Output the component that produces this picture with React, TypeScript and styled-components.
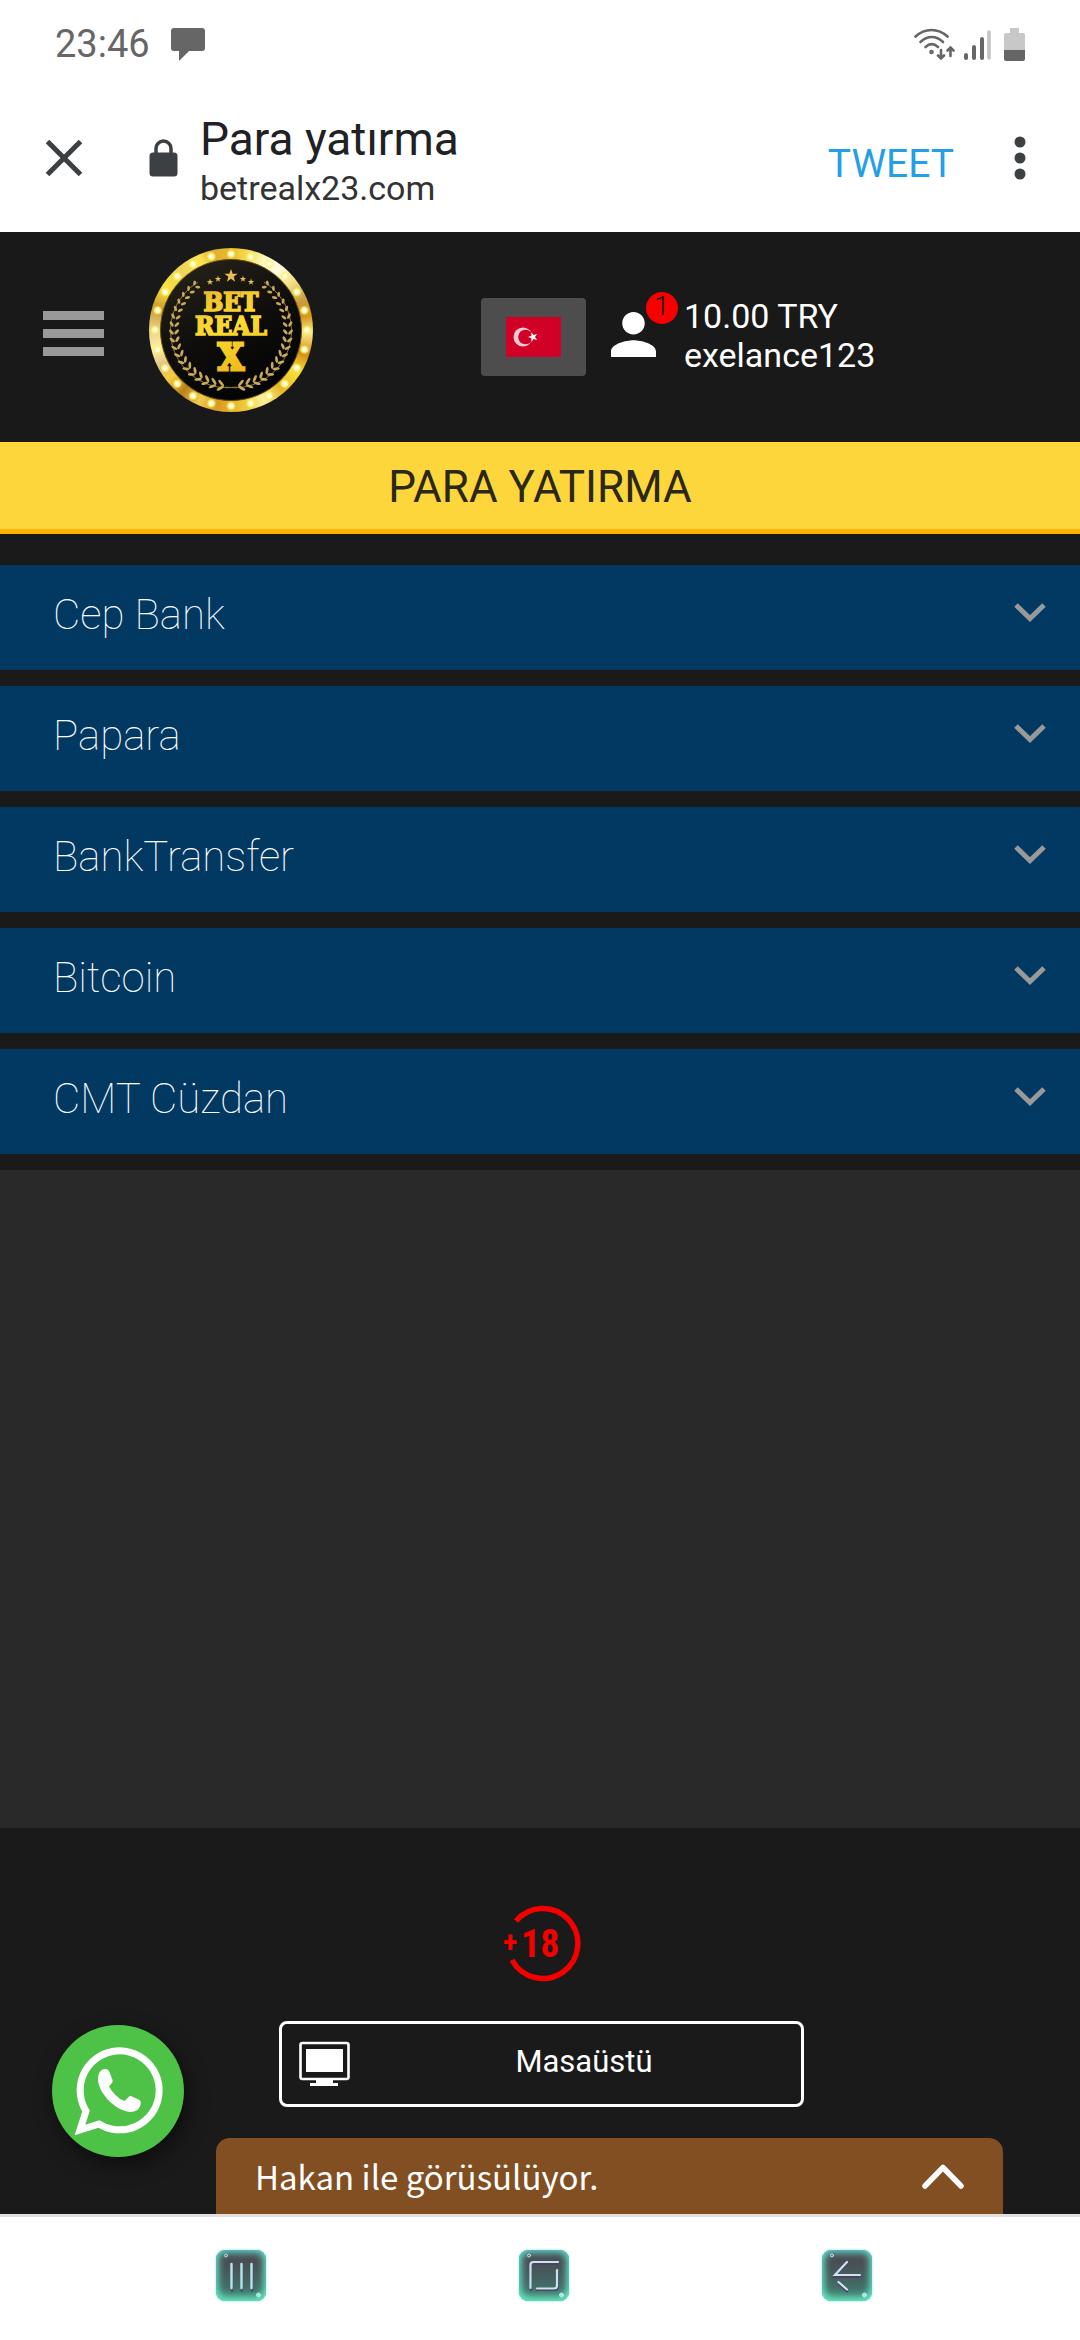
import React from "react";
import styled, { createGlobalStyle } from "styled-components";

const GlobalStyle = createGlobalStyle`
  * { box-sizing: border-box; }
  body { margin: 0; background: #1a1a1a; font-family: Roboto, sans-serif; }
  button { font-family: inherit; border: 0; padding: 0; background: none; cursor: pointer; }
  svg { display: block; flex: none; }
  h1, h2, p { margin: 0; font-weight: 400; }
`;

const Screen = styled.div`
  min-height: 100vh;
  display: flex;
  flex-direction: column;
`;

const StatusBar = styled.div`
  height: 88px;
  padding: 0 55px;
  display: flex;
  align-items: center;
  justify-content: space-between;
  background: #fff;
  color: #666;
`;

const StatusGroup = styled.div<{ $gap: number }>`
  display: flex;
  align-items: center;
  gap: ${(p) => p.$gap}px;
`;

const Clock = styled.time`
  font-size: 38px;
  line-height: 44px;
`;

const BrowserBar = styled.header`
  height: 144px;
  padding: 0 46px 4px 45px;
  display: flex;
  align-items: center;
  background: #fff;
  color: #3c4043;
`;

const IconButton = styled.button`
  display: flex;
  color: inherit;
`;

const LockSlot = styled.span`
  margin-left: 66px;
`;

const PageInfo = styled.div`
  flex: 1;
  padding: 6px 0 0 22px;
`;

const PageTitle = styled.p`
  font-size: 46px;
  line-height: 54px;
  color: #202124;
`;

const PageUrl = styled.p`
  font-size: 34px;
  line-height: 44px;
  color: #333;
`;

const TweetButton = styled.button`
  padding-top: 12px;
  margin-right: 53px;
  font-size: 39px;
  line-height: 48px;
  color: #259ee8;
`;

const SiteHeader = styled.header`
  height: 210px;
  padding: 0 43px 14px;
  display: flex;
  align-items: center;
  background: #191919;
`;

const MenuButton = styled.button`
  width: 61px;
  margin: 7px 45px 0 0;
  display: flex;
  flex-direction: column;
  gap: 9px;
`;

const MenuLine = styled.span`
  width: 100%;
  height: 9px;
  background: #999;
`;

const LogoLink = styled.a`
  width: 164px;
  height: 164px;
  border-radius: 50%;
  background: conic-gradient(
    #e9b92e, #f7dc50 12deg, #fdf6c0 25deg, #fffbe0 38deg, #f4e184 52deg, #c79b3c 68deg,
    #d69a1e 80deg, #fbe98a 92deg, #d48c16 108deg, #f8e13c 122deg, #e6b728 140deg,
    #fbf0a0 155deg, #f0cd3c 168deg, #d99a22 190deg, #f0cb50 204deg, #b8801c 218deg,
    #f3cf3a 232deg, #e0c080 242deg, #fbf1a6 256deg, #e9cd7c 272deg, #c8992e 286deg,
    #f8e23a 302deg, #eed25c 320deg, #fbe650 336deg, #e0b030 348deg, #e9b92e
  );
`;

const Account = styled.div`
  margin: 13px 0 0 168px;
  display: flex;
  align-items: center;
`;

const FlagButton = styled.button`
  width: 105px;
  height: 78px;
  margin-right: 24px;
  border-radius: 4px;
  display: flex;
  align-items: center;
  justify-content: center;
  background: #4d4d4d;
`;

const UserButton = styled.button`
  position: relative;
  width: 46px;
  height: 78px;
  padding-bottom: 4px;
  margin-right: 28px;
  display: flex;
  align-items: center;
  justify-content: center;
`;

const Badge = styled.span`
  position: absolute;
  top: -6px;
  right: -22px;
  width: 32px;
  height: 32px;
  border-radius: 50%;
  background: #f60000;
  color: #000;
  font-size: 26px;
  font-weight: 300;
  line-height: 28px;
  text-align: center;
`;

const Balance = styled.div`
  padding-bottom: 2px;
  font-size: 34px;
  line-height: 39px;
  color: #fff;
`;

const Heading = styled.h1`
  height: 92px;
  border-bottom: 5px solid #ffb400;
  background: #fcd63a;
  color: #2b281a;
  font-size: 44px;
  line-height: 90px;
  text-align: center;
`;

const MethodList = styled.section`
  padding: 31px 0 16px;
  display: flex;
  flex-direction: column;
  gap: 16px;
  background: #1a1a1a;
`;

const MethodRow = styled.button`
  height: 105px;
  padding: 0 34px 6px 53px;
  display: flex;
  align-items: center;
  justify-content: space-between;
  background: #023963;
  color: #fff;
  font-size: 42px;
  font-weight: 100;
`;

const Content = styled.div`
  flex: 1;
  background: #292929;
`;

const Footer = styled.footer`
  position: relative;
  height: 386px;
  padding: 75px 0 0 3px;
  display: flex;
  flex-direction: column;
  align-items: center;
  gap: 38px;
  background: #1a1a1a;
`;

const DesktopButton = styled.button`
  width: 525px;
  height: 86px;
  padding: 0 17px;
  border: 3px solid #fff;
  border-radius: 8px;
  display: flex;
  align-items: center;
  color: #fff;
  font-size: 31px;
`;

const DesktopLabel = styled.span`
  flex: 1;
  padding: 0 0 5px 34px;
`;

const WhatsAppButton = styled.a`
  position: absolute;
  left: 52px;
  bottom: 57px;
  width: 132px;
  height: 132px;
  border-radius: 50%;
  background: #4ec247;
  box-shadow: 4px 8px 20px rgba(0, 0, 0, 0.5);
`;

const ChatBar = styled.button`
  position: absolute;
  left: 216px;
  right: 77px;
  bottom: 0;
  height: 76px;
  padding: 0 38px 0 39px;
  border-radius: 14px 14px 0 0;
  display: flex;
  align-items: center;
  justify-content: space-between;
  background: #824f23;
  color: #fff;
  && { font-family: "Noto Sans CJK SC", sans-serif; }
  font-size: 33px;
`;

const SystemNav = styled.nav`
  height: 126px;
  padding: 0 208px 7px 216px;
  border-top: 3px solid #e3dfdf;
  display: flex;
  align-items: center;
  justify-content: space-between;
  background: #fff;
`;

const GlowKey = styled.button`
  width: 50px;
  height: 51px;
  border-radius: 9px;
  background: linear-gradient(#4a4b50 18%, #46605f 55%, #3f8377);
  box-shadow: inset 0 2px 9px #5fe0dc, inset 0 -4px 9px #6beab4, 0 0 3px #8ee6d4;
`;

const at = (cx: number, cy: number, r: number, deg: number) => {
  const a = ((deg - 90) * Math.PI) / 180;
  return [cx + r * Math.cos(a), cy + r * Math.sin(a)];
};

const starPoints = (cx: number, cy: number, r: number) =>
  Array.from({ length: 10 }, (_, i) =>
    at(cx, cy, i % 2 ? r * 0.4 : r, i * 36).map((n) => n.toFixed(2)).join(",")
  ).join(" ");

const Laurel = () => (
  <g fill="#c9aa5a">
    <path d="M88 139 A57 57 0 0 1 49 34" fill="none" stroke="#8f7539" strokeWidth="1" />
    {Array.from({ length: 18 }, (_, i) => {
      const deg = 190 + i * 7.8;
      const size = 4 - i * 0.09;
      return [-1, 1].map((side) => {
        const [x, y] = at(81.5, 82, 56.5 + side * 2.6, deg);
        return (
          <ellipse key={`${i}${side}`} cx={x} cy={y} rx={size} ry="1.4"
            transform={`rotate(${deg - side * 40} ${x} ${y})`} />
        );
      });
    })}
  </g>
);

const Logo = () => (
  <svg width="164" height="164" viewBox="0 0 164 164">
    <defs>
      <linearGradient id="gold" x1="0" y1="0" x2="0.3" y2="1">
        <stop offset="0" stopColor="#e9b42c" />
        <stop offset="0.5" stopColor="#fbdc32" />
        <stop offset="1" stopColor="#eebb18" />
      </linearGradient>
      <linearGradient id="disc" x1="0.2" y1="0" x2="0.7" y2="1">
        <stop offset="0" stopColor="#26221a" />
        <stop offset="0.5" stopColor="#0f0e0c" />
        <stop offset="1" stopColor="#010203" />
      </linearGradient>
      <radialGradient id="bulb">
        <stop offset="0.3" stopColor="#fffef0" />
        <stop offset="0.6" stopColor="#fff57a" stopOpacity="0.9" />
        <stop offset="1" stopColor="#ffe93c" stopOpacity="0" />
      </radialGradient>
    </defs>
    <circle cx="82" cy="82" r="70.5" fill="url(#disc)" stroke="#6b4d12" strokeWidth="1" />
    {Array.from({ length: 24 }, (_, i) => {
      const [x, y] = at(82, 82, 76, i * 15);
      return <circle key={i} cx={x} cy={y} r="5" fill="url(#bulb)" />;
    })}
    <Laurel />
    <g transform="matrix(-1 0 0 1 164 0)"><Laurel /></g>
    <g fill="#e8bd52">
      <polygon points={starPoints(82, 28, 7)} />
      {[[61, 34], [69, 31], [94, 31], [102, 34]].map(([x, y]) => (
        <polygon key={x} points={starPoints(x, y, 3.4)} />
      ))}
    </g>
    <text fill="url(#gold)" stroke="url(#gold)" strokeWidth="1.6" textAnchor="middle" fontWeight="700"
      fontSize="26" fontFamily='"DejaVu Serif Condensed", "DejaVu Serif", serif'>
      <tspan x="82" y="63">BET</tspan>
      <tspan x="82" y="87">REAL</tspan>
      <tspan x="82" y="122" fontSize="37" strokeWidth="3">X</tspan>
    </text>
  </svg>
);

const methods = ["Cep Bank", "Papara", "BankTransfer", "Bitcoin", "CMT Cüzdan"];

export default function App() {
  return (
    <>
      <GlobalStyle />
      <Screen>
        <StatusBar>
          <StatusGroup $gap={21}>
            <Clock>23:46</Clock>
            <svg width="34" height="34" viewBox="0 0 34 34" fill="#666">
              <path d="M3 1h28a3 3 0 0 1 3 3v17a3 3 0 0 1-3 3H18l-10 10v-10H3a3 3 0 0 1-3-3V4a3 3 0 0 1 3-3z" />
            </svg>
          </StatusGroup>
          <StatusGroup $gap={9}>
            <svg width="41" height="34" viewBox="0 0 41 34" fill="none" stroke="#666" strokeWidth="2.6" strokeLinecap="round">
              <path d="M1.5 9.500C11 .8 24 .8 33.500 9.500" />
              <path d="M6.500 15C13.500 8.300 22 8.300 29 15" />
              <path d="M11.500 20C15.500 16.300 20 16.300 24 20" />
              <circle cx="17.500" cy="25" r="1" />
              <path d="M27 23v8M24 28.500l3 3 3-3M36.500 29v-8M33.500 23.500l3-3 3 3" strokeWidth="2.600" />
            </svg>
            <svg width="27" height="34" viewBox="0 0 27 34" strokeWidth="4" strokeLinecap="round" stroke="#666">
              <path d="M2 28v3M10 20v11M18 12v19" />
              <path d="M25 5v26" stroke="#c4c4c4" strokeWidth="3.600" />
            </svg>
            <svg width="25" height="34" viewBox="-4 0 25 34">
              <path d="M6 1h9v5h4a2 2 0 0 1 2 2v15H0V8a2 2 0 0 1 2-2h4z" fill="#c8c8c8" />
              <path d="M0 23h21v9a2 2 0 0 1-2 2H2a2 2 0 0 1-2-2z" fill="#666" />
            </svg>
          </StatusGroup>
        </StatusBar>

        <BrowserBar>
          <IconButton aria-label="Kapat">
            <svg width="38" height="38" viewBox="0 0 38 38" stroke="currentColor" strokeWidth="5">
              <path d="M2.500 2.500l33 33M35.500 2.500l-33 33" />
            </svg>
          </IconButton>
          <LockSlot>
            <svg width="29" height="38" viewBox="0 0 29 38" fill="currentColor">
              <path d="M4 13.500h21a3.500 3.500 0 0 1 3.500 3.500v17a3.500 3.500 0 0 1-3.500 3.500H4A3.500 3.500 0 0 1 .5 34V17A3.500 3.500 0 0 1 4 13.500z" />
              <path d="M7 16V9.500a7.500 7.500 0 0 1 15 0V16" fill="none" stroke="currentColor" strokeWidth="3.500" />
            </svg>
          </LockSlot>
          <PageInfo>
            <PageTitle>Para yatırma</PageTitle>
            <PageUrl>betrealx23.com</PageUrl>
          </PageInfo>
          <TweetButton>TWEET</TweetButton>
          <IconButton aria-label="Diğer seçenekler">
            <svg width="27" height="44" viewBox="0 0 27 44" fill="currentColor">
              <circle cx="13" cy="6" r="5.500" />
              <circle cx="13" cy="22" r="5.500" />
              <circle cx="13" cy="38" r="5.500" />
            </svg>
          </IconButton>
        </BrowserBar>

        <SiteHeader>
          <MenuButton aria-label="Menü">
            <MenuLine />
            <MenuLine />
            <MenuLine />
          </MenuButton>
          <LogoLink href="#" aria-label="Bet Real X">
            <Logo />
          </LogoLink>
          <Account>
            <FlagButton aria-label="Türkçe">
              <svg width="55" height="40" viewBox="0 0 55 40">
                <rect width="55" height="40" fill="#d00027" />
                <circle cx="17" cy="20" r="9.500" fill="#f4c9d0" />
                <circle cx="19.500" cy="20" r="7.300" fill="#d00027" />
                <polygon points={starPoints(27, 20, 5)} fill="#fff" transform="rotate(-90 27 20)" />
              </svg>
            </FlagButton>
            <UserButton aria-label="Hesabım">
              <svg width="45" height="45" viewBox="4 4 16 16" fill="#fff">
                <path d="M12 12c2.210 0 4-1.790 4-4s-1.790-4-4-4-4 1.790-4 4 1.790 4 4 4zm0 2c-2.670 0-8 1.340-8 4v2h16v-2c0-2.660-5.330-4-8-4z" />
              </svg>
              <Badge>1</Badge>
            </UserButton>
            <Balance>
              <p>10.00 TRY</p>
              <p>exelance123</p>
            </Balance>
          </Account>
        </SiteHeader>

        <Heading>PARA YATIRMA</Heading>

        <MethodList>
          {methods.map((name) => (
            <MethodRow key={name} aria-expanded={false}>
              {name}
              <svg width="32" height="24" viewBox="0 0 32 24" fill="none" stroke="#999" strokeWidth="5">
                <path d="M2 2l14 13.500L30 2" />
              </svg>
            </MethodRow>
          ))}
        </MethodList>

        <Content />

        <Footer>
          <svg width="80" height="80" viewBox="0 0 80 80">
            <path d="M14 18A35 35 0 1 1 10 57" fill="none" stroke="#f40000" strokeWidth="5.500" />
            <g fill="#f40000" fontWeight="700" fontFamily='"Roboto Condensed", Roboto, sans-serif'>
              <text x="1" y="49" fontSize="30">+</text>
              <text x="19" y="54" fontSize="38">18</text>
            </g>
          </svg>
          <DesktopButton>
            <svg width="51" height="46" viewBox="0 0 51 46">
              <rect x="1.500" y="2" width="48" height="36" rx="2" fill="none" stroke="#fff" strokeWidth="2.600" />
              <path d="M7 8h37v23H7zM17 38h17v4h5v3H11v-3h6z" fill="#fff" />
            </svg>
            <DesktopLabel>Masaüstü</DesktopLabel>
          </DesktopButton>
          <WhatsAppButton href="#" aria-label="WhatsApp">
            <svg width="132" height="132" viewBox="0 0 132 132">
              <path d="M34 86A39.500 39.500 0 1 1 47 99L28 105Z" fill="none" stroke="#fff" strokeWidth="7" />
              <path d="M53 44Q56 44 57 46L60.500 55Q61 57 59.500 58.500L57 61.500Q60 67 63.500 70Q67 74 72.700 76L77 71.500Q78.500 70.500 80 71.500L87.500 75Q89 76 88.800 78C88.500 83 85 87 78 87C64 86 46 68 46 54C46 48 49 44 53 44Z" fill="#fff" />
            </svg>
          </WhatsAppButton>
          <ChatBar>
            Hakan ile görüsülüyor.
            <svg width="44" height="26" viewBox="0 0 44 26" fill="none" stroke="#fff" strokeWidth="5.500" strokeLinecap="round" strokeLinejoin="round">
              <path d="M4 23L22 4.500L40 23" />
            </svg>
          </ChatBar>
        </Footer>

        <SystemNav>
          <GlowKey aria-label="Son uygulamalar">
            <svg width="50" height="51" viewBox="0 0 50 51" fill="none" stroke="#b5e6ec" strokeWidth="2.400" strokeLinecap="round">
              <path d="M16 41V16M26 41V16M36 41V16" stroke="#47526a" />
              <path d="M15.500 38V14M25.500 38V14M35.500 38V14" />
              <circle cx="10" cy="5.500" r="1.500" strokeWidth="1" />
              <circle cx="42.500" cy="45" r="2" fill="#a0ecd5" strokeWidth="1" />
            </svg>
          </GlowKey>
          <GlowKey aria-label="Ana ekran">
            <svg width="50" height="51" viewBox="0 0 50 51" fill="none" stroke="#c9e2f0" strokeWidth="2.200" strokeLinecap="round" strokeLinejoin="round">
              <path d="M12 40V17Q12 14 15 14H39M18 40H35Q38.500 40 38.500 37V22" stroke="#4a4460" />
              <path d="M11.500 38V15Q11.500 12 14.500 12H39M18 38.500H35Q38 38.500 38 35.500V20" />
              <circle cx="10" cy="5.500" r="1.500" strokeWidth="1" />
              <circle cx="42.500" cy="45" r="2" fill="#a0ecd5" strokeWidth="1" />
            </svg>
          </GlowKey>
          <GlowKey aria-label="Geri">
            <svg width="50" height="51" viewBox="0 0 50 51" fill="none" stroke="#cfe2f2" strokeWidth="2.200" strokeLinecap="round">
              <path d="M25 13.500L13 27H38M17 34L25 41.500" stroke="#4a4460" />
              <path d="M25 12L13 25H38M16.500 32L25 39.500" />
              <circle cx="10" cy="5.500" r="1.500" strokeWidth="1" />
              <circle cx="42.500" cy="45" r="2" fill="#a0ecd5" strokeWidth="1" />
            </svg>
          </GlowKey>
        </SystemNav>
      </Screen>
    </>
  );
}
